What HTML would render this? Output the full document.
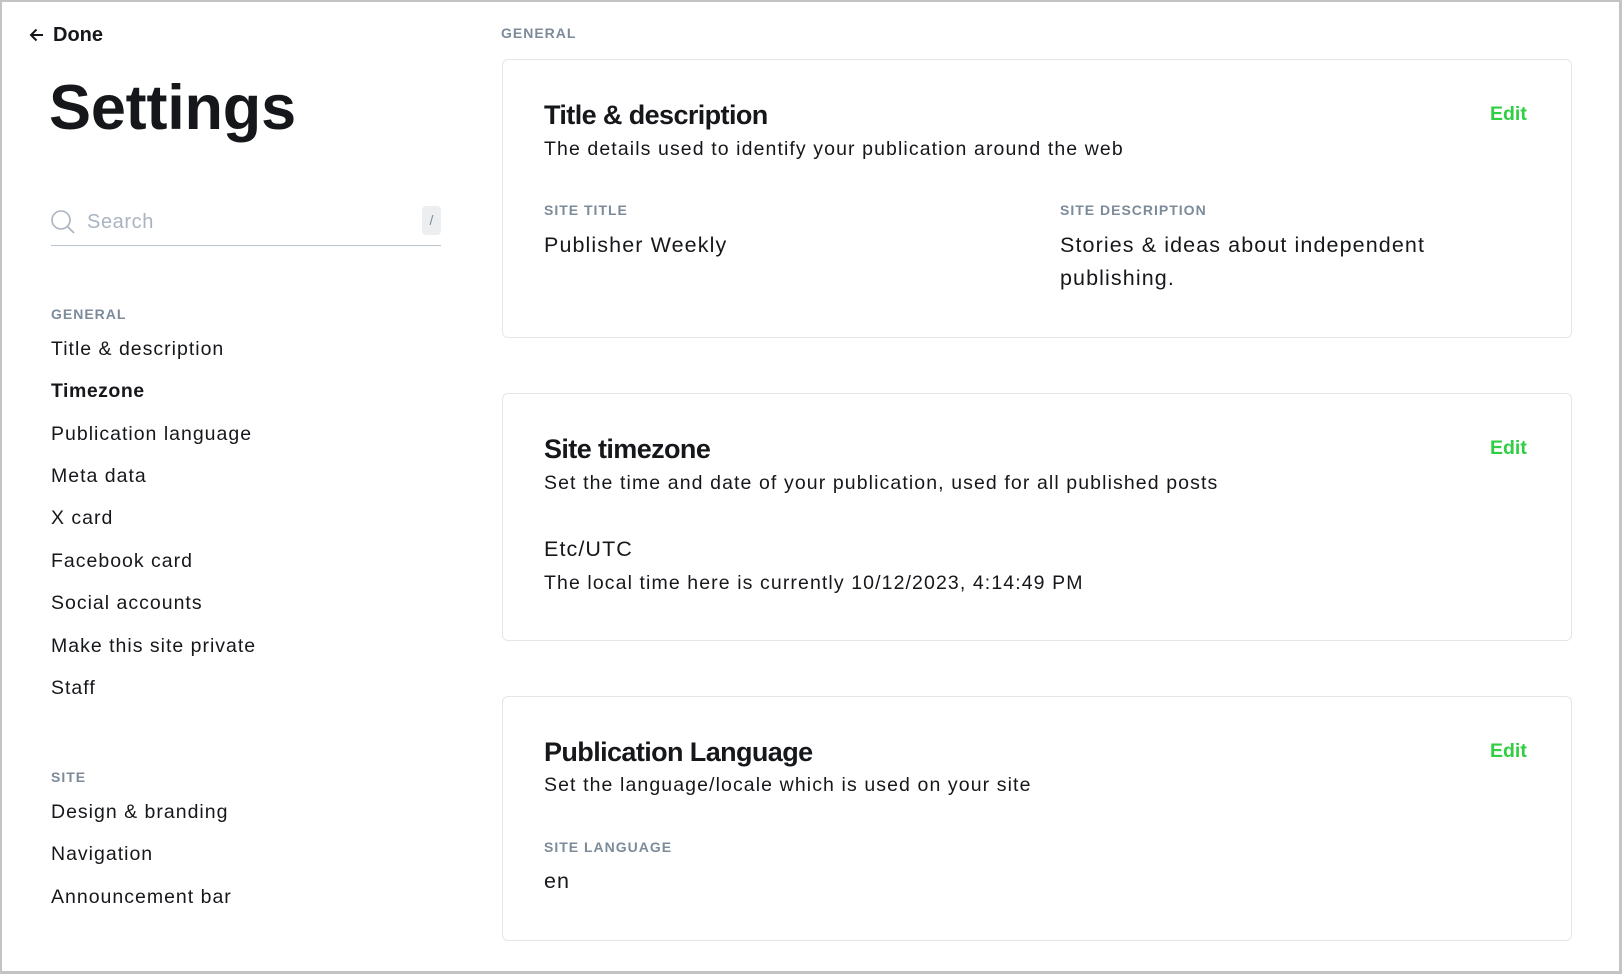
<!DOCTYPE html>
<html><head><meta charset="utf-8"><style>
*{margin:0;padding:0;box-sizing:border-box}
html,body{width:1622px;height:974px;overflow:hidden;background:#fff}
body{font-family:"Liberation Sans",Arial,sans-serif;color:#15171a;position:relative}
.frame{position:absolute;left:0;top:0;width:1622px;height:974px;border:2px solid #c4c4c4;border-right-width:3px;border-bottom-width:3px;background:#fff}
.a{position:absolute;white-space:nowrap;line-height:1}
.lbl{font-size:14px;font-weight:bold;color:#7c8b9a;letter-spacing:1px}
.nav{font-size:19.5px;color:#15171a;letter-spacing:1px}
.card{position:absolute;left:502px;width:1070px;border:1px solid #e6e6e6;border-radius:6px;background:#fff}
.h{font-size:27px;font-weight:bold;letter-spacing:-0.6px}
.d{font-size:19.5px;letter-spacing:1.1px;color:#15171a}
.v{font-size:21.5px;letter-spacing:1.1px}
.e{font-size:19.5px;font-weight:bold;color:#30cf43}
</style></head><body>
<div class="frame"></div>
<svg class="a" style="left:29px;top:27px" width="16" height="16" viewBox="0 0 16 16"><path d="M14 8H2M7.5 2.5L2 8l5.5 5.5" fill="none" stroke="#15171a" stroke-width="2"/></svg>
<div class="a" style="left:53px;top:25px;font-size:20px;font-weight:bold">Done</div>
<div class="a" style="left:49px;top:77px;font-size:63px;font-weight:bold;letter-spacing:-0.2px">Settings</div>
<svg class="a" style="left:50px;top:209px" width="26" height="26" viewBox="0 0 26 26"><circle cx="11" cy="11" r="9" fill="none" stroke="#aab4c0" stroke-width="1.6"/><path d="M17.5 17.5L24 24" stroke="#aab4c0" stroke-width="1.6"/></svg>
<div class="a" style="left:87px;top:212px;font-size:20px;color:#a9b4c0;letter-spacing:0.6px">Search</div>
<div class="a" style="left:422px;top:206px;width:19px;height:29px;background:#eceef0;border-radius:4px;font-size:14px;color:#7c8b9a;text-align:center;line-height:29px">/</div>
<div class="a" style="left:51px;top:245px;width:390px;height:1px;background:#b8c2cc"></div>
<div class="a lbl" style="left:51px;top:307px">GENERAL</div>
<div class="a nav" style="left:51px;top:340px">Title &amp; description</div>
<div class="a nav" style="left:51px;top:382px;font-weight:bold;letter-spacing:0.5px">Timezone</div>
<div class="a nav" style="left:51px;top:425px">Publication language</div>
<div class="a nav" style="left:51px;top:467px">Meta data</div>
<div class="a nav" style="left:51px;top:509px">X card</div>
<div class="a nav" style="left:51px;top:552px">Facebook card</div>
<div class="a nav" style="left:51px;top:594px">Social accounts</div>
<div class="a nav" style="left:51px;top:637px">Make this site private</div>
<div class="a nav" style="left:51px;top:679px">Staff</div>
<div class="a lbl" style="left:51px;top:770px">SITE</div>
<div class="a nav" style="left:51px;top:803px">Design &amp; branding</div>
<div class="a nav" style="left:51px;top:845px">Navigation</div>
<div class="a nav" style="left:51px;top:888px">Announcement bar</div>

<div class="a lbl" style="left:501px;top:26px">GENERAL</div>

<div class="card" style="top:59px;height:279px"></div>
<div class="a h" style="left:544px;top:102px">Title &amp; description</div>
<div class="a e" style="left:1490px;top:105px">Edit</div>
<div class="a d" style="left:544px;top:140px">The details used to identify your publication around the web</div>
<div class="a lbl" style="left:544px;top:203px">SITE TITLE</div>
<div class="a v" style="left:544px;top:235px">Publisher Weekly</div>
<div class="a lbl" style="left:1060px;top:203px">SITE DESCRIPTION</div>
<div class="a v" style="left:1060px;top:235px">Stories &amp; ideas about independent</div>
<div class="a v" style="left:1060px;top:268px">publishing.</div>

<div class="card" style="top:393px;height:248px"></div>
<div class="a h" style="left:544px;top:436px">Site timezone</div>
<div class="a e" style="left:1490px;top:439px">Edit</div>
<div class="a d" style="left:544px;top:474px">Set the time and date of your publication, used for all published posts</div>
<div class="a v" style="left:544px;top:539px">Etc/UTC</div>
<div class="a d" style="left:544px;top:574px">The local time here is currently 10/12/2023, 4:14:49 PM</div>

<div class="card" style="top:696px;height:245px"></div>
<div class="a h" style="left:544px;top:739px">Publication Language</div>
<div class="a e" style="left:1490px;top:742px">Edit</div>
<div class="a d" style="left:544px;top:776px">Set the language/locale which is used on your site</div>
<div class="a lbl" style="left:544px;top:840px">SITE LANGUAGE</div>
<div class="a v" style="left:544px;top:871px">en</div>
</body></html>
